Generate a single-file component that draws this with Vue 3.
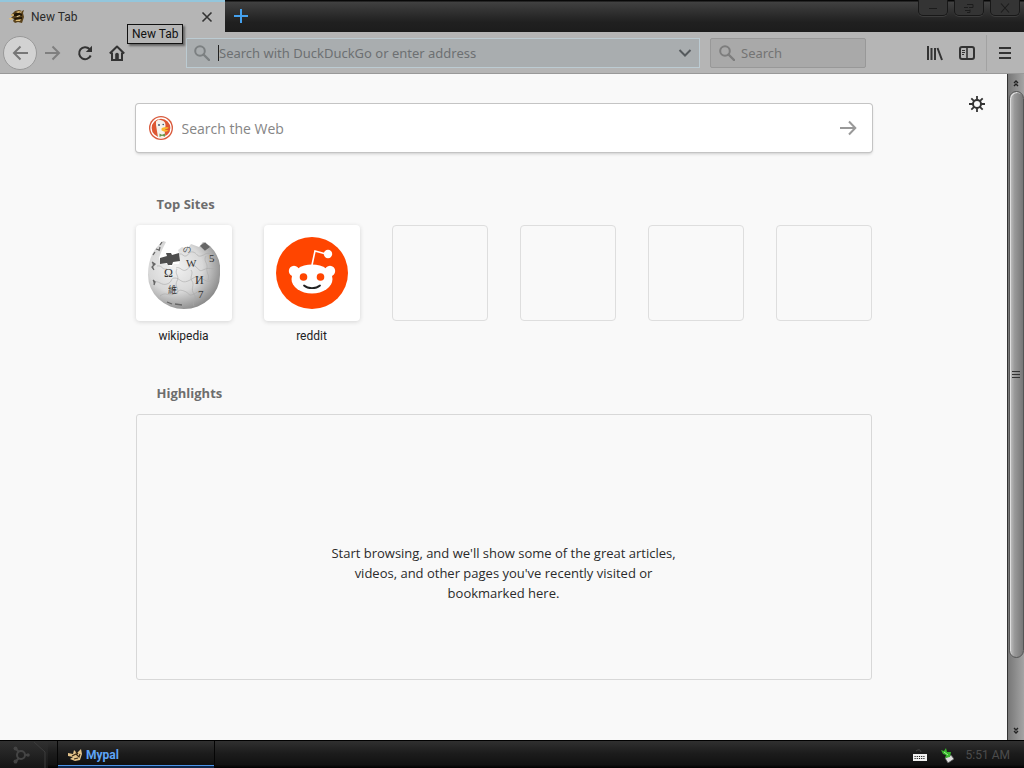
<script setup>
import { ref } from 'vue'

const address = ref('')
const quick = ref('')
const web = ref('')
const emptyTiles = 4
</script>

<template>
  <div class="window">
    <header class="tabbar">
      <div class="tab">
        <svg class="bee" viewBox="0 0 16 16" width="16" height="16" aria-hidden="true">
          <path d="M6 2l4-1 3 1 2-1-1 3 1 4-1 3-1 3-4-1-3 1-2-2 1-2-3-1 2-2-2-1 2-2z" fill="#5a431d" />
          <path d="M1 6l3-1 2 1-2 1zM0 9l3 0 1 1-3 1zM7 3l3-1 2 1-3 1zM6 10l6 0-1 2-4 0z" fill="#e0bd74" />
          <path d="M7 6l3-1 1 2-3 1zM11 3l2-1-1 2z" fill="#f5e2ad" />
          <path d="M5 5l2-1 3 0 3 1 0 2-2-1-3 1-3 0zM5 9l8-1 0 2-7 1z" fill="#211708" />
        </svg>
        <span class="tab-title">New Tab</span>
        <button class="tab-close" aria-label="Close tab">
          <svg viewBox="0 0 12 12" width="12" height="12"><path d="M1.5 1.5l9 9M10.5 1.5l-9 9" stroke="#333" stroke-width="1.6" /></svg>
        </button>
        <div class="tooltip" role="tooltip">New Tab</div>
      </div>
      <button class="new-tab" aria-label="Open a new tab">
        <svg viewBox="0 0 16 16" width="16" height="16"><path d="M8 1v14M1 8h14" stroke="#45a1ee" stroke-width="2" /></svg>
      </button>
      <div class="caption">
        <button aria-label="Minimize"><svg viewBox="0 0 12 12" width="12" height="12"><path d="M2 6.5h8" stroke="#1c1c1c" stroke-width="1" /></svg></button>
        <button aria-label="Restore"><svg viewBox="0 0 12 12" width="12" height="12"><path d="M4 2.5h6M6 5.5h4v-3M1 5.5h4M2 8.5h5M4 10.5h3v-3" fill="none" stroke="#1c1c1c" stroke-width="1" /></svg></button>
        <button aria-label="Close"><svg viewBox="0 0 12 12" width="12" height="12"><path d="M2 1.5l8 9M10 1.5l-8 9" stroke="#1c1c1c" stroke-width="1.1" /></svg></button>
      </div>
    </header>

    <nav class="toolbar" aria-label="Navigation">
      <button class="tool back" aria-label="Back">
        <svg viewBox="0 0 16 16" width="16" height="16"><path d="M8.5 1.5L2 8l6.5 6.5M2 8h14" fill="none" stroke="#777" stroke-width="2" /></svg>
      </button>
      <button class="tool" aria-label="Forward">
        <svg viewBox="0 0 16 16" width="16" height="16"><path d="M7.5 1.5L14 8l-6.500 6.500M14 8H0" fill="none" stroke="#7f7f7f" stroke-width="2" /></svg>
      </button>
      <button class="tool" aria-label="Reload">
        <svg viewBox="0 0 16 16" width="16" height="16"><path d="M13.7 10.5A6 6 0 1 1 12.5 4" fill="none" stroke="#333" stroke-width="2" /><path d="M15 .8V7H8.8z" fill="#333" /></svg>
      </button>
      <button class="tool" aria-label="Home">
        <svg viewBox="0 0 16 16" width="16" height="16"><path d="M.8 8.5L8 1.5l7.2 7" fill="none" stroke="#333" stroke-width="2" stroke-linejoin="round" /><path d="M3 7.500V15h10V7.500" fill="none" stroke="#333" stroke-width="2" /><path d="M6.200 15V9.500a1.800 1.800 0 0 1 3.600 0V15z" fill="#333" /></svg>
      </button>
      <label class="field address">
        <svg viewBox="0 0 16 16" width="16" height="16" aria-hidden="true"><circle cx="6" cy="6" r="4.8" fill="none" stroke="#7c8082" stroke-width="2" /><path d="M9.5 9.5L15 15" stroke="#7c8082" stroke-width="2.4" stroke-linecap="round" /></svg>
        <span class="caret"></span>
        <input v-model="address" type="text" aria-label="Address" placeholder="Search with DuckDuckGo or enter address" />
        <button class="drop" aria-label="Show history">
          <svg viewBox="0 0 14 10" width="14" height="10"><path d="M1.5 2L7 7.5 12.5 2" fill="none" stroke="#555a5d" stroke-width="2" /></svg>
        </button>
      </label>
      <label class="field quick">
        <svg viewBox="0 0 16 16" width="16" height="16" aria-hidden="true"><circle cx="6" cy="6" r="4.8" fill="none" stroke="#7d7d7d" stroke-width="2" /><path d="M9.5 9.5L15 15" stroke="#7d7d7d" stroke-width="2.4" stroke-linecap="round" /></svg>
        <input v-model="quick" type="text" aria-label="Search" placeholder="Search" />
      </label>
      <div class="tools-end">
        <button class="tool" aria-label="Library">
          <svg viewBox="0 0 16 16" width="16" height="16"><path d="M1 1v14M4.5 3v12M8 3v12M10.5 3l4.500 12" stroke="#333" stroke-width="2" /></svg>
        </button>
        <button class="tool" aria-label="Sidebars">
          <svg viewBox="0 0 16 16" width="16" height="16"><rect x="1" y="2" width="14" height="12" rx="2" fill="none" stroke="#333" stroke-width="2" /><path d="M8 2v12" stroke="#333" stroke-width="1.6" /><path d="M3 5.5h3M3 7.5h3M3 9.5h2" stroke="#333" /></svg>
        </button>
        <button class="tool menu" aria-label="Open menu">
          <svg viewBox="0 0 16 16" width="16" height="16"><path d="M2 3h12M2 8h12M2 13h12" stroke="#333" stroke-width="2" /></svg>
        </button>
      </div>
    </nav>

    <div class="view">
      <main class="page">
        <button class="gear" aria-label="Customize your New Tab page">
          <svg viewBox="0 0 16 16" width="16" height="16"><circle cx="8" cy="8" r="4" fill="none" stroke="#333" stroke-width="2" /><path d="M8 0v4M8 12v4M0 8h4M12 8h4M2.300 2.300l2.600 2.600M11.100 11.100l2.600 2.600M13.700 2.300l-2.600 2.600M4.900 11.100l-2.600 2.600" stroke="#333" stroke-width="1.8" /></svg>
        </button>
        <div class="column">
          <label class="websearch">
            <svg viewBox="0 0 24 24" width="24" height="24" aria-hidden="true">
              <circle cx="12" cy="12" r="12" fill="#d95b3d" />
              <circle cx="12" cy="12" r="10" fill="#de5833" stroke="#fff" stroke-width="1.3" />
              <path d="M7 5.500l2.500-2 3 .8c3 .6 4.300 2.800 4 6l-1 4 1 6.500-4 1-3.500-.6L7.800 14 7 9z" fill="#f5f2eb" />
              <circle cx="10" cy="9" r=".9" fill="#31516b" /><circle cx="14.200" cy="8.500" r=".8" fill="#31516b" />
              <path d="M12.500 12.500c2-1.700 4-1.200 7-1.200 0 1.500-2 2-4 2.200 1.500.8 3 .5 4 1-1.500 1.800-5.500 1.300-7-.3z" fill="#fbb72c" />
              <path d="M10.500 17.500l2.500 1.200 3-1.200v3.200l-3-1-2.500 1.200z" fill="#69984c" />
            </svg>
            <input v-model="web" type="text" aria-label="Search the Web" placeholder="Search the Web" />
            <button aria-label="Submit search">
              <svg viewBox="0 0 18 16" width="18" height="16"><path d="M10 1.500L16.300 8 10 14.500M16.300 8H1" fill="none" stroke="#999" stroke-width="2" /></svg>
            </button>
          </label>

          <section class="top-sites">
            <h2>Top Sites</h2>
            <div class="tiles">
              <a class="site" href="#wikipedia">
                <span class="tile">
                  <svg viewBox="0 0 72 72" width="72" height="72" aria-hidden="true">
                    <defs><radialGradient id="globe" cx=".38" cy=".38" r=".68"><stop offset="0" stop-color="#f2f2f2" /><stop offset=".55" stop-color="#d8d8d8" /><stop offset="1" stop-color="#868686" /></radialGradient></defs>
                    <path d="M9 10l6-6 3 1-4 8-3 8 2 6h7l3 3 3-3h5l1-8-2-6 4-3 5 2 4-5 8 3 4-5 7 4A35 35 0 0 1 72 38A36 34 0 0 1 0 38C0 26 3 17 9 10z" fill="url(#globe)" />
                    <path d="M12 21l7-2-1-3 5 0 1 2 7-2 1 8-7 1-1 3-4 0-1-2-7 1z" fill="#4e4e4e" />
                    <path d="M31 17c4-1 4 3 7 2s3-5 7-4 4 5 8 4 5-4 9-2M9 29c6-1 4 4 10 3M28 31c4-2 6 4 10 2s5-7 9-4 4 6 8 4 6-2 11-1M5 45c6-2 8 4 14 2s3-6 8-6 6 6 13 3 5-5 12-3 5 5 14 2M12 59c6-5 8 1 14-2s4-5 10-3 4 6 10 3 5-5 13-2M29 32c-3 5 3 7 0 12s3 8 0 13M43 33c3 4-2 7 1 11s-2 8 2 13-3 7 0 12M58 19c-3 5 2 7 1 12s3 7 1 12" fill="none" stroke="#aaa" stroke-width=".6" />
                    <g fill="#333" font-family="Liberation Serif, serif">
                      <text x="16" y="40" font-size="12">Ω</text><text x="38" y="30" font-size="11">W</text><text x="47" y="47" font-size="12">И</text><text x="20" y="56" font-family="Noto Sans CJK SC, sans-serif" font-size="9">維</text><text x="50" y="61" font-size="11">7</text><text x="61" y="25" font-size="11">5</text><text x="35" y="15" font-size="8">の</text>
                    </g>
                    <path d="M5 18l2-3M8 12l3 1M12 8l2-3M11 14l1-4M4 25l3 2-3 3 2 3M5 43l2 2-1 3M53 9l4-3 4 4-4 3zM19 65l5 2M27 67l7 1" stroke="#666" stroke-width="1.3" fill="#666" />
                  </svg>
                </span>
                <span class="site-name">wikipedia</span>
              </a>
              <a class="site" href="#reddit">
                <span class="tile">
                  <svg viewBox="0 0 72 72" width="72" height="72" aria-hidden="true">
                    <circle cx="36" cy="36" r="36" fill="#ff4500" />
                    <path d="M36 28l3-14 11 3" fill="none" stroke="#fff" stroke-width="1.600" />
                    <circle cx="52" cy="17" r="4.200" fill="#fff" /><circle cx="18" cy="34" r="5.200" fill="#fff" /><circle cx="54" cy="34" r="5.200" fill="#fff" />
                    <ellipse cx="36" cy="42" rx="20.500" ry="14.500" fill="#fff" />
                    <circle cx="27.500" cy="40" r="3.800" fill="#ff4500" /><circle cx="44.500" cy="40" r="3.800" fill="#ff4500" />
                    <path d="M28 48.500c4 3.500 12 3.500 16 0" fill="none" stroke="#222" stroke-width="1.800" stroke-linecap="round" />
                  </svg>
                </span>
                <span class="site-name">reddit</span>
              </a>
              <div v-for="n in emptyTiles" :key="n" class="tile empty"></div>
            </div>
          </section>

          <section class="recent">
            <h2>Highlights</h2>
            <div class="highlights">
              <p>Start browsing, and we'll show some of the great articles, videos, and other pages you've recently visited or bookmarked here.</p>
            </div>
          </section>
        </div>
      </main>
      <div class="scrollbar" aria-hidden="true">
        <svg viewBox="0 0 10 10" width="10" height="10"><path d="M3 5l2-2 2 2M3 8l2-2 2 2" fill="none" stroke="#222" stroke-width="1.4" /></svg>
        <div class="thumb"><i></i><i></i><i></i></div>
        <div class="rest"></div>
        <svg viewBox="0 0 10 10" width="10" height="10"><path d="M3 2l2 2 2-2M3 5l2 2 2-2" fill="none" stroke="#222" stroke-width="1.4" /></svg>
      </div>
    </div>

    <footer class="taskbar">
      <button class="start" aria-label="Start">
        <svg viewBox="0 0 48 27" width="48" height="27"><path d="M34 1l11 10v16" fill="none" stroke="#3c3c3c" stroke-width="1" /><g stroke="#444" fill="none" stroke-width="2"><circle cx="21" cy="14" r="4" /><path d="M16 8l3 3M16 20l3-3M25 14h3" /></g><g fill="#444"><circle cx="15.500" cy="7.500" r="2" /><circle cx="15.500" cy="20.500" r="2" /><circle cx="28" cy="14" r="1.800" /></g></svg>
      </button>
      <button class="task">
        <svg viewBox="0 0 16 16" width="16" height="16" aria-hidden="true"><path d="M1 6l5 1 1-4 3 3 4-4 1 5-2 6-5 1-5-2 3-2-5-1z" fill="#e4c48b" /><path d="M5 9l4-2 3 3 1-3M7 12l4-1M9 5l2 2" fill="none" stroke="#382916" stroke-width="1.2" /></svg>
        Mypal
      </button>
      <div class="tray">
        <svg viewBox="0 0 16 14" width="16" height="14" role="img" aria-label="Keyboard"><path d="M4 3q4-3 5 1" fill="none" stroke="#444" /><path d="M1 6h14v7H1z" fill="#f1f1f1" /><path d="M2.500 8.500h11M2.500 10.500h11" stroke="#222" stroke-dasharray="1.2 1" stroke-width="1.2" /></svg>
        <svg viewBox="0 0 14 16" width="14" height="16" role="img" aria-label="Safely remove hardware"><path d="M5 11l6-3 3 4-6 4z" fill="#ddd" stroke="#555" stroke-width=".8" /><path d="M1 3l3 1 2-3 1 4 4 0-1 5-5 1 1-3-3-1z" fill="#39b52e" /><path d="M4 5l4 3" stroke="#9df58c" /></svg>
        <time class="clock">5:51 AM</time>
      </div>
    </footer>
  </div>
</template>

<style>
body { margin: 0; }
</style>

<style scoped>
.window { display: flex; flex-direction: column; min-height: 100vh; background: #f9f9f9; color: #2b2b2b; font-family: "Open Sans", "Noto Sans", sans-serif; font-size: 13px; }
.window * { box-sizing: border-box; }
button { display: flex; align-items: center; justify-content: center; padding: 0; border: 0; background: none; font: inherit; color: inherit; }
svg { display: block; flex: none; }
input { min-width: 0; flex: 1; padding: 0; border: 0; outline: 0; background: none; font: inherit; color: inherit; }
input::placeholder { color: inherit; opacity: 1; }
.tabbar, .toolbar, .taskbar, .clock, .site-name { font-family: Roboto, "Noto Sans", sans-serif; }

.tabbar { display: flex; height: 32px; background: linear-gradient(#080808 0, #080808 1px, #414141 2px, #303030 12px, #202020 22px, #1c1c1c); }
.tab { position: relative; display: flex; align-items: center; width: 225px; padding: 0 12px 0 9px; border-top: 2px solid #93c6dc; background: #b5b5b5; font-size: 12px; }
.tab-title { flex: 1; margin-left: 6px; }
.tooltip { position: absolute; left: 127px; top: 22px; z-index: 2; padding: 0 4px; border: 1px solid #111; background: #b5b5b5; box-shadow: 2px 2px 2px #666; color: #111; line-height: 18px; white-space: nowrap; }
.new-tab { width: 32px; }
.caption { display: flex; gap: 6px; margin-left: auto; padding-right: 4px; }
.caption button { width: 30px; height: 16px; border: 1px solid #181818; border-top: 0; border-radius: 0 0 5px 5px; background: #343434; box-shadow: 0 1px 0 #3c3c3c; }

.toolbar { display: flex; align-items: center; height: 42px; padding: 0 2px 0 3px; border-bottom: 1px solid #999; background: #b5b5b5; }
.tool { width: 32px; height: 32px; }
.back { width: 34px; height: 34px; border: 1px solid #999; border-radius: 50%; background: #d2d2d2; }
.field { display: flex; align-items: center; height: 30px; padding: 0 8px; color: #6d7072; font-family: "Noto Sans", sans-serif; font-size: 13px; }
.address { flex: 1; max-width: 514px; margin-left: 53px; padding: 0 7px; border: 1px solid #bccbd2; background: #a9adaf; }
.caret { width: 1px; height: 16px; margin-left: 8px; background: #222; }
.drop { width: 14px; height: 28px; }
.quick { width: 156px; margin-left: 10px; border: 1px solid #989898; border-radius: 2px; background: #a9a9a9; color: #747474; }
.quick input { margin-left: 6px; }
.tools-end { display: flex; align-items: center; margin-left: auto; }
.menu { width: 36px; height: 36px; margin-left: 3px; border-left: 1px solid #a2a2a2; }

.view { display: flex; flex: 1; }
.page { position: relative; flex: 1; padding: 30px 20px; }
.gear { position: absolute; top: 22px; right: 22px; width: 16px; height: 16px; }
.column { max-width: 736px; margin: 0 auto; }
.websearch { display: flex; align-items: center; height: 48px; padding: 0 15px 0 13px; border-radius: 3px; background: #fff; box-shadow: 0 0 0 1px #c4c4c4, 0 2px 3px #ccc; color: #858585; font-size: 14px; }
.websearch input { margin-left: 9px; }
h2 { margin: 0; padding-left: 21px; color: #6d6d6d; font-size: 13px; line-height: 20px; }
.top-sites { padding-top: 42px; }
.recent { padding-top: 37px; }
.tiles { display: grid; grid-template-columns: repeat(auto-fit, 96px); gap: 32px; margin-top: 11px; }
.site { color: #222; text-decoration: none; text-align: center; }
.tile { display: flex; align-items: center; justify-content: center; height: 96px; border-radius: 4px; background: #fff; box-shadow: 0 1px 4px #d4d4d4; }
.empty { border: 1px solid #dedede; background: none; box-shadow: none; }
.site-name { display: block; padding-top: 5px; font-size: 12px; line-height: 20px; }
.highlights { display: flex; justify-content: center; min-height: 266px; margin-top: 11px; padding: 128px 20px 20px; border: 1px solid #d8d8d8; border-radius: 3px; }
.highlights p { max-width: 346px; margin: 0; font-size: 13px; line-height: 20px; text-align: center; }

.scrollbar { display: flex; flex-direction: column; align-items: center; width: 17px; padding: 4px 0; border-left: 1px solid #333; background: linear-gradient(90deg, #777, #a4a4a4); }
.thumb { display: flex; flex: 567 1 0; flex-direction: column; align-items: center; justify-content: center; gap: 2px; width: 15px; margin-top: 3px; border: 1px solid #555; border-radius: 8px; background: linear-gradient(90deg, #c4c4c4, #999 35%, #777); box-shadow: inset 1px 1px 0 #ddd; }
.thumb i { width: 8px; height: 1px; background: #333; }
.rest { flex: 68 1 0; }

.taskbar { display: flex; height: 28px; border-top: 1px solid #000; background: linear-gradient(#303030, #1c1c1c 45%, #111 88%, #000); }
.start { width: 48px; background: linear-gradient(#303030, #151515); }
.task { justify-content: flex-start; gap: 3px; width: 158px; margin-left: 9px; padding-left: 9px; border: solid #050505; border-width: 0 1px; box-shadow: inset 0 -2px 0 #10284a, inset 0 -3px 0 #4b93e8; color: #5ea4f5; font-size: 12px; font-weight: 700; }
.tray { display: flex; align-items: center; gap: 12px; margin-left: auto; padding-right: 14px; }
.clock { color: #4c4c4c; font-size: 12px; }
</style>
